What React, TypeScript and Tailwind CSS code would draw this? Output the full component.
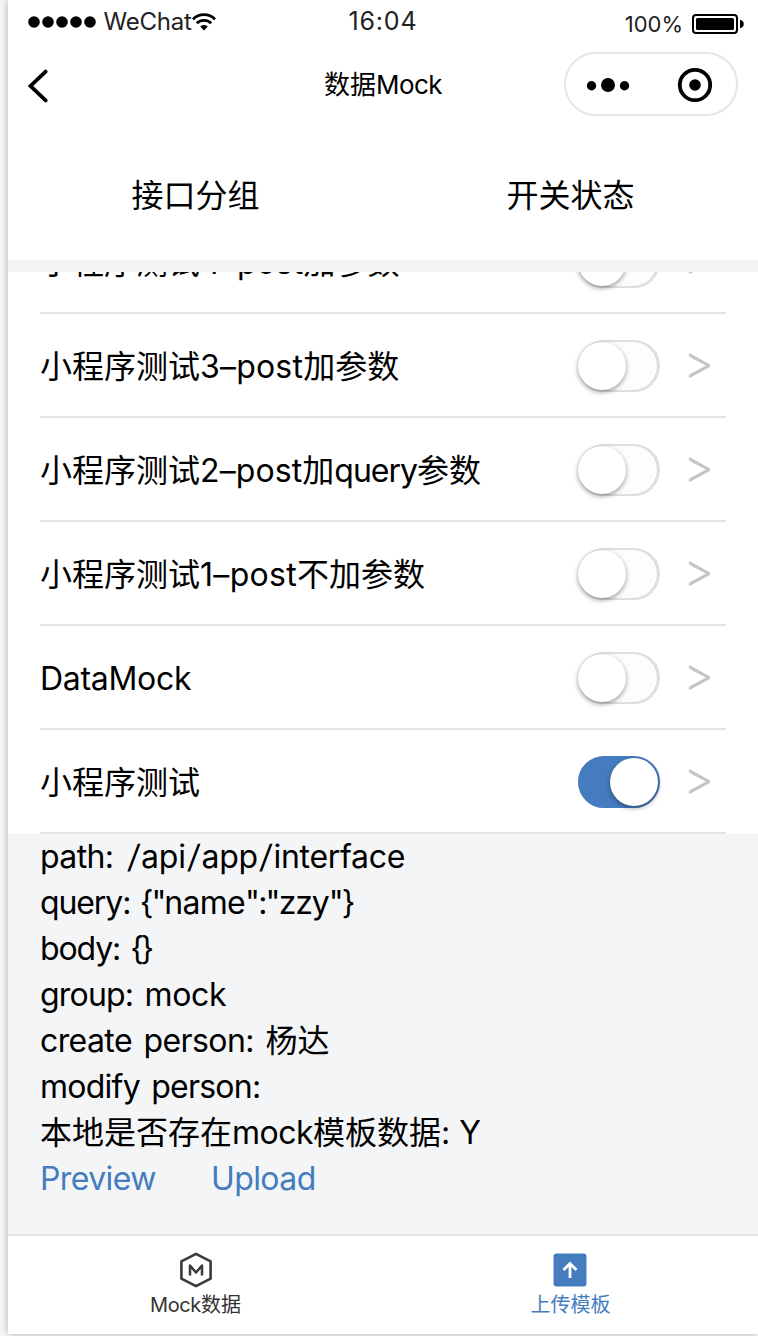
import React from "react";

type Part = { text: string; className?: string };

const rows: { parts: Part[]; on: boolean }[] = [
  { parts: [{ text: "小程序测试" }, { text: "4–post", className: "tracking-[0.1px]" }, { text: "加参数" }], on: false },
  { parts: [{ text: "小程序测试" }, { text: "3–post", className: "tracking-[0.2px]" }, { text: "加参数" }], on: false },
  { parts: [{ text: "小程序测试" }, { text: "2–post", className: "tracking-[0.1px]" }, { text: "加" }, { text: "query", className: "tracking-[-1px]" }, { text: "参数" }], on: false },
  { parts: [{ text: "小程序测试" }, { text: "1–post", className: "tracking-[0.3px]" }, { text: "不加参数" }], on: false },
  { parts: [{ text: "DataMock", className: "tracking-[-0.3px]" }], on: false },
  { parts: [{ text: "小程序测试" }], on: true },
];

const slash: Part = { text: "/", className: "inline-block w-[15.6px] -skew-x-6 text-center" };

const details: Part[][] = [
  [
    { text: "path: ", className: "tracking-[-0.6px] [word-spacing:3.6px]" },
    slash,
    { text: "api", className: "tracking-[-0.2px]" },
    slash,
    { text: "app", className: "tracking-[-0.2px]" },
    slash,
    { text: "interface", className: "tracking-[-0.3px]" },
  ],
  [
    { text: "query: ", className: "tracking-[-1.1px] [word-spacing:1.5px]" },
    { text: '{"', className: "tracking-[-2px]" },
    { text: "name", className: "tracking-[-0.7px]" },
    { text: '":"', className: "tracking-[-1.8px]" },
    { text: "zzy", className: "tracking-[-1.1px]" },
    { text: '"}', className: "tracking-[-1.8px]" },
  ],
  [
    { text: "body: ", className: "tracking-[-1.1px] [word-spacing:2px]" },
    { text: "{}", className: "tracking-[-3.2px]" },
  ],
  [
    { text: "group: ", className: "tracking-[-0.8px] [word-spacing:3px]" },
    { text: "mock", className: "tracking-[-0.3px]" },
  ],
  [{ text: "create person: ", className: "tracking-[-0.6px] [word-spacing:3.2px]" }, { text: "杨达" }],
  [{ text: "modify person:", className: "tracking-[-0.75px] [word-spacing:3px]" }],
  [{ text: "本地是否存在" }, { text: "mock", className: "tracking-[-0.5px]" }, { text: "模板数据" }, { text: ": Y" }],
];

function Parts({ parts }: { parts: Part[] }) {
  return (
    <>
      {parts.map((p, i) => (
        <span key={i} className={p.className}>{p.text}</span>
      ))}
    </>
  );
}

function Switch({ on }: { on: boolean }) {
  return (
    <div
      className={
        on
          ? "mt-[2px] flex h-[52px] w-[82px] justify-end rounded-full border-2 border-[#457cbf] bg-[#457cbf]"
          : "mt-[2px] flex h-[52px] w-[82px] rounded-full border-2 border-[#dfdfdf] bg-[#fdfdfd] shadow-[inset_-1px_0_0_#c3d4e8]"
      }
    >
      <div
        className={
          on
            ? "size-12 rounded-full bg-white shadow-[0_2px_5px_rgba(0,0,0,0.4)]"
            : "-ml-[2px] size-12 rounded-full bg-white shadow-[0_2px_5px_rgba(0,0,0,0.4)]"
        }
      />
    </div>
  );
}

function StatusBar() {
  return (
    <div className="flex h-11 items-start">
      <div className="flex w-[250px] items-center pl-5 pt-[7px]">
        <svg width="70" height="12" viewBox="0 0 70 12">
          {[6, 20, 34, 48, 62].map((x) => (
            <circle key={x} cx={x} cy="6" r="5.8" />
          ))}
        </svg>
        <span className="ml-[5.5px] text-[24px] leading-[30px] tracking-[-0.2px] text-[#222]">WeChat</span>
        <svg width="24" height="18" viewBox="0 0 24 18" fill="none" stroke="#000" strokeWidth="2.8">
          <path d="M1 6.2C7 .2 17 .2 23 6.2" />
          <path d="M4.8 10.2c4-3.8 10.4-3.8 14.4 0" />
          <path d="M8.2 13.6c2-2 5.6-2 7.6 0L12 17.6z" fill="#000" stroke="none" />
        </svg>
      </div>
      <div className="flex-1 pt-[6px] text-center text-[25px] leading-[30px] tracking-[0.8px] text-[#222]">16:04</div>
      <div className="flex w-[250px] items-center justify-end pr-[14px] pt-[8px]">
        <span className="mr-[9px] pt-[1px] text-[22px] leading-[30px] text-[#222]">100%</span>
        <svg width="52" height="20" viewBox="0 0 52 20">
          <rect x="1" y="1" width="44" height="18" rx="3" fill="none" stroke="#000" strokeWidth="2" />
          <rect x="4" y="4" width="38" height="12" rx="1.5" />
          <path d="M48 6c5 0 5 8 0 8z" />
        </svg>
      </div>
    </div>
  );
}

function NavBar() {
  return (
    <div className="flex h-[84px] items-start">
      <div className="w-[250px] pl-5 pt-[25px]">
        <svg width="22" height="34" viewBox="0 0 22 34" fill="none" stroke="#000" strokeWidth="3.8" strokeLinecap="round">
          <path d="M17.6 2.6 2.6 17l15 14.4" />
        </svg>
      </div>
      <div className="flex-1 pt-[23px] text-center text-[26px] leading-9">
        数据<span className="tracking-[-0.5px]">Mock</span>
      </div>
      <div className="flex w-[250px] justify-end pr-5 pt-2">
        <div className="h-16 w-[174px] rounded-full border-2 border-[#e5e5e5]">
          <svg width="170" height="60" viewBox="0 0 170 60">
            <circle cx="25.5" cy="31.8" r="4.7" />
            <circle cx="42" cy="31" r="7" />
            <circle cx="58.5" cy="31.8" r="4.7" />
            <circle cx="129" cy="31" r="15.2" fill="none" stroke="#000" strokeWidth="3.8" />
            <circle cx="129" cy="31" r="5.8" />
          </svg>
        </div>
      </div>
    </div>
  );
}

export default function App() {
  return (
    <div className="h-[1336px] w-[758px] overflow-hidden bg-[#f8f8f8] pl-2 font-['Inter','Noto_Sans_CJK_SC',sans-serif] text-black">
      <div className="flex h-[1334px] w-[750px] flex-col bg-white shadow-[0_0_8px_rgba(0,0,0,0.3)]">
        <StatusBar />
        <NavBar />
        <div className="grid h-[132px] grid-cols-2 pt-[2px] text-center text-[32px] leading-[132px]">
          <div>接口分组</div>
          <div>开关状态</div>
        </div>
        <div className="h-3 shrink-0 bg-[#f4f5f7]" />
        <div className="flex h-[562px] shrink-0 flex-col justify-end overflow-hidden pl-8">
          {rows.map((row, i) => (
            <div key={i} className="flex h-[104px] w-[686px] shrink-0 items-center border-b-2 border-[#e4e4e4]">
              <div className="flex-1 whitespace-nowrap pt-[4px] text-[32px] leading-[46px]">
                <Parts parts={row.parts} />
              </div>
              <Switch on={row.on} />
              <div className="ml-[23px] w-[43px] pb-[6px] text-[48px] font-light leading-[46px] text-[#c4c4c4]">&gt;</div>
            </div>
          ))}
        </div>
        <div className="h-[400px] shrink-0 whitespace-pre bg-[#f4f5f7] pl-8 text-[32px] leading-[46px]">
          {details.map((d, i) => (
            <div key={i} className="h-[46px]"><Parts parts={d} /></div>
          ))}
          <div className="flex text-[#457cbf]">
            <div className="w-[171px] tracking-[-0.6px]">Preview</div>
            <div className="tracking-[-0.6px]">Upload</div>
          </div>
        </div>
        <div className="grid h-[100px] shrink-0 grid-cols-2 border-t-2 border-[#e2e3e5] text-[20px] leading-7">
          <div className="flex flex-col items-center pt-4 text-[#333]">
            <svg width="36" height="36" viewBox="0 0 36 36" fill="none" stroke="#3a3a3a" strokeWidth="2.6" strokeLinejoin="round">
              <path d="M18 1.8 32.6 9.4v17.2L18 34.2 3.4 26.6V9.4z" />
              <path d="M12 23.5v-10l6 7 6-7v10" strokeWidth="2.5" />
            </svg>
            <div className="mt-[3px]"><span className="tracking-[-0.4px]">Mock</span>数据</div>
          </div>
          <div className="flex flex-col items-center pt-[17px] text-[#457cbf]">
            <svg className="mr-[2px]" width="34" height="34" viewBox="0 0 34 34">
              <rect x=".5" y=".5" width="33" height="33" rx="3" fill="#457cbf" />
              <path d="M17 25V10.5M10.5 17 17 10.5l6.5 6.5" fill="none" stroke="#fff" strokeWidth="2.8" />
            </svg>
            <div className="mt-[4px]">上传模板</div>
          </div>
        </div>
      </div>
    </div>
  );
}
